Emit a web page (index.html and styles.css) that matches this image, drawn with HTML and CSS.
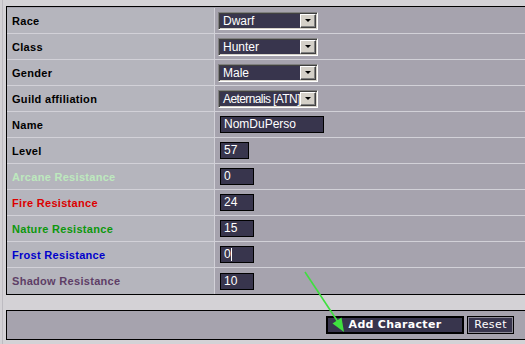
FILE: index.html
```html
<!DOCTYPE html>
<html lang="fr">
<head>
<meta charset="utf-8">
<title>Add Character</title>
<link rel="stylesheet" href="styles.css">
</head>
<body>
<div class="frame">
  <div class="form">
    <div class="row"><div class="label">Race</div><div class="value"><div class="select"><span class="select-text">Dwarf</span><span class="select-btn"><i class="tri"></i></span></div></div></div>
    <div class="row"><div class="label">Class</div><div class="value"><div class="select"><span class="select-text">Hunter</span><span class="select-btn"><i class="tri"></i></span></div></div></div>
    <div class="row"><div class="label">Gender</div><div class="value"><div class="select"><span class="select-text">Male</span><span class="select-btn"><i class="tri"></i></span></div></div></div>
    <div class="row"><div class="label">Guild affiliation</div><div class="value"><div class="select"><span class="select-text tight">Aeternalis [ATN]</span><span class="select-btn"><i class="tri"></i></span></div></div></div>
    <div class="row"><div class="label">Name</div><div class="value"><div class="field w-name">NomDuPerso</div></div></div>
    <div class="row"><div class="label">Level</div><div class="value"><div class="field w-level">57</div></div></div>
    <div class="row"><div class="label arcane">Arcane Resistance</div><div class="value"><div class="field w-res">0</div></div></div>
    <div class="row"><div class="label fire">Fire Resistance</div><div class="value"><div class="field w-res">24</div></div></div>
    <div class="row"><div class="label nature">Nature Resistance</div><div class="value"><div class="field w-res">15</div></div></div>
    <div class="row"><div class="label frost">Frost Resistance</div><div class="value"><div class="field w-res">0<span class="caret"></span></div></div></div>
    <div class="row last"><div class="label shadow">Shadow Resistance</div><div class="value"><div class="field w-res">10</div></div></div>
  </div>
  <div class="actions">
    <button class="btn btn-add" type="button">Add Character</button>
    <button class="btn btn-reset" type="button">Reset</button>
  </div>
</div>
<svg class="arrow" width="525" height="344" viewBox="0 0 525 344">
  <line x1="305" y1="272" x2="340" y2="325" stroke="#3fe03f" stroke-width="1.6"/>
  <polygon points="344,332 332.5,323.5 341.5,317.5" fill="#3fe03f"/>
</svg>
</body>
</html>
```

FILE: styles.css
```css
html, body {
  margin: 0;
  padding: 0;
}
body {
  background: #d4d2d6;
  width: 525px;
  height: 344px;
  overflow: hidden;
  position: relative;
  font-family: "Liberation Sans", Arial, sans-serif;
}
.frame {
  margin-left: 2px;
  border-left: 1px solid #bdbbc1;
  padding: 6px 0 0 3px;
  height: 344px;
  box-sizing: border-box;
}
.form {
  width: 530px;
  border: 1px solid #000;
  padding-top: 1px;
  background: #a6a3ae;
}
.row {
  display: grid;
  grid-template-columns: 207px 1px 1fr;
  height: 26px;
  box-sizing: border-box;
  border-bottom: 1px solid #d2d1d8;
}
.row.last {
  border-bottom: none;
}
.row::before {
  content: "";
  grid-column: 2;
  grid-row: 1;
  background: #d2d1d8;
}
.label {
  grid-column: 1;
  grid-row: 1;
  background: #b5b5bd;
  display: flex;
  align-items: center;
  padding-left: 5px;
  font-weight: bold;
  font-size: 11px;
  letter-spacing: 0.3px;
  color: #000;
  white-space: nowrap;
}
.value {
  grid-column: 3;
  grid-row: 1;
  display: flex;
  align-items: center;
  padding-left: 3px;
}
.arcane { color: #bde9bd; }
.fire { color: #dc0000; }
.nature { color: #0c980c; }
.frost { color: #0000cc; }
.shadow { color: #5e3e66; }

.select {
  width: 100px;
  height: 18px;
  box-sizing: border-box;
  border: 1px solid;
  border-color: #808080 #ffffff #ffffff #808080;
  box-shadow: inset 1px 1px #404040, inset -1px -1px #d4d0c8;
  background: #38354d;
  display: flex;
  align-items: center;
  padding: 2px 1px 2px 2px;
}
.select-text {
  flex: 1;
  min-width: 0;
  overflow: hidden;
  white-space: nowrap;
  color: #fff;
  font-size: 12px;
  line-height: 14px;
  padding-left: 2px;
}
.select-text.tight {
  letter-spacing: -0.6px;
}
.select-btn {
  width: 16px;
  height: 14px;
  box-sizing: border-box;
  background: #d4d0c8;
  border: 1px solid;
  border-color: #ffffff #404040 #404040 #ffffff;
  box-shadow: inset -1px -1px #808080;
  display: flex;
  align-items: center;
  justify-content: center;
  flex: none;
}
.tri {
  width: 0;
  height: 0;
  border-left: 3px solid transparent;
  border-right: 3px solid transparent;
  border-top: 3px solid #000;
}
.field {
  margin-left: 2px;
  height: 17px;
  box-sizing: border-box;
  border: 1px solid #000;
  background: #38354d;
  color: #fff;
  font-size: 12px;
  line-height: 15px;
  padding-left: 3px;
  white-space: nowrap;
  display: flex;
  align-items: center;
}
.w-name { width: 104px; }
.w-level { width: 29px; }
.w-res { width: 34px; }
.caret {
  display: inline-block;
  width: 1px;
  height: 13px;
  background: #fff;
}
.actions {
  margin-top: 15px;
  width: 530px;
  height: 30px;
  box-sizing: border-box;
  border: 1px solid #000;
  background: #a6a3ae;
  display: flex;
  justify-content: flex-end;
  align-items: center;
  gap: 3px;
  padding-right: 21px;
}
.btn {
  height: 18px;
  box-sizing: border-box;
  background: #38354d;
  color: #fff;
  font-family: "DejaVu Sans", Verdana, sans-serif;
  font-size: 11px;
  padding: 0;
  margin: 0;
  line-height: 14px;
  cursor: pointer;
}
.btn-add {
  width: 138px;
  border: 2px solid #000;
  font-weight: bold;
  letter-spacing: 0.3px;
}
.btn-reset {
  width: 47px;
  border: 1px solid #000;
  box-shadow: inset 1px 1px #8e8c99, inset -1px -1px #8e8c99;
  letter-spacing: 0.4px;
}
.arrow {
  position: absolute;
  left: 0;
  top: 0;
  pointer-events: none;
}
```
